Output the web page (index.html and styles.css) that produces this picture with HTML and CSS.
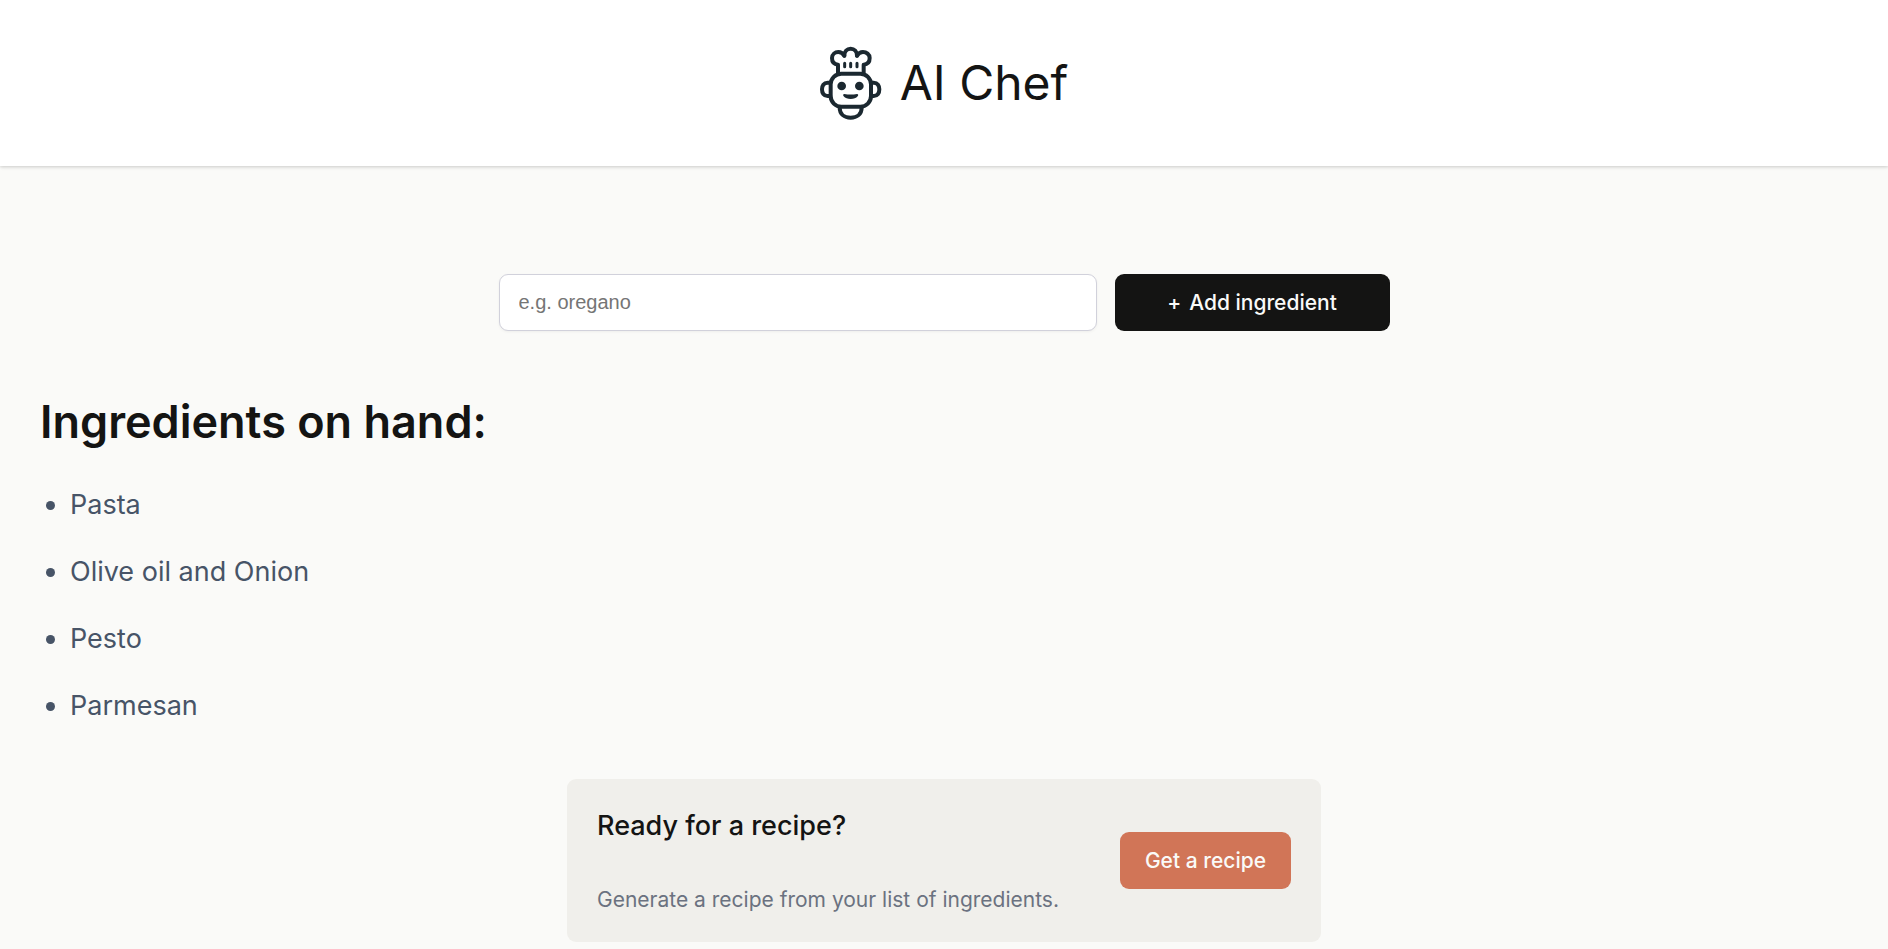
FILE: index.html
```html
<!DOCTYPE html>
<html lang="en">
<head>
  <meta charset="utf-8">
  <meta name="viewport" content="width=device-width, initial-scale=1">
  <title>AI Chef</title>
  <link rel="stylesheet" href="styles.css">
</head>
<body>
  <header class="site-header">
    <svg class="logo" viewBox="63 45 186 222" fill="none" stroke="#1b2830" stroke-width="12" stroke-linecap="round" stroke-linejoin="round" aria-hidden="true">
      <path d="M117 126V101C105 100 99 92 99 81C99 70 108 63 118 63C126 63 132 67 136 74"/>
      <path d="M136 74C136 61 144 53 155 53C166 53 174 61 174 74"/>
      <path d="M194 126V101C206 100 212 92 212 81C212 70 202 63 192 63C184 63 178 67 174 74"/>
      <path stroke-width="9" d="M137 97V107M155 97V107M174 97V107"/>
      <rect x="95" y="128" width="121" height="99" rx="32"/>
      <path d="M92 155H86C74 155 69 164 69 175C69 186 74 195 86 195H94"/>
      <path d="M218 155H224C236 155 241 164 241 175C241 186 236 195 224 195H216"/>
      <path d="M122 230C122 249 136 260 155 260C174 260 188 249 188 230"/>
      <g fill="#1b2830" stroke="none">
        <circle cx="128" cy="165" r="13"/>
        <circle cx="181" cy="165" r="13"/>
        <path d="M136 189Q155 192 174 189Q180 190 176 196Q169 204 155 204Q141 204 134 196Q130 190 136 189Z"/>
      </g>
    </svg>
    <h1 class="site-title">AI Chef</h1>
  </header>

  <main class="content">
    <form class="add-form">
      <input class="add-input" type="text" name="ingredient" placeholder="e.g. oregano" aria-label="Add ingredient">
      <button class="button add-button" type="button"><span class="plus">+</span>Add ingredient</button>
    </form>

    <section class="ingredients">
      <h2 class="ingredients-title">Ingredients on hand:</h2>
      <ul class="ingredients-list">
        <li>Pasta</li>
        <li>Olive oil and Onion</li>
        <li>Pesto</li>
        <li>Parmesan</li>
      </ul>
    </section>

    <section class="recipe-card">
      <div class="recipe-text">
        <h3 class="recipe-title">Ready for a recipe?</h3>
        <p class="recipe-note">Generate a recipe from your list of ingredients.</p>
      </div>
      <button class="button recipe-button" type="button">Get a recipe</button>
    </section>
  </main>
</body>
</html>
```

FILE: styles.css
```css
* {
  box-sizing: border-box;
}

body {
  margin: 0;
  background: #fafaf8;
  color: #141413;
  font-family: Inter, "Liberation Sans", sans-serif;
}

h1, h2, h3, p, ul {
  margin: 0;
}

.site-header {
  display: flex;
  align-items: center;
  justify-content: center;
  gap: 18px;
  padding: 46px 30px;
  background: #fff;
  box-shadow: 0 1px 4px rgba(0, 0, 0, 0.1), 0 1px 3px rgba(0, 0, 0, 0.1);
}

.logo {
  width: 62px;
  height: 74px;
}

.site-title {
  font-size: 48px;
  font-weight: 400;
  line-height: 74px;
}

.content {
  padding: 108px 40px 7px;
}

.add-form {
  display: flex;
  justify-content: center;
  gap: 18px;
}

.add-input {
  flex: 0 1 598px;
  min-width: 0;
  height: 57px;
  padding: 0 19px;
  border: 1px solid #d1d1db;
  border-radius: 9px;
  background: #fff;
  box-shadow: 0 1px 3px rgba(0, 0, 0, 0.05);
  font-family: "Liberation Sans", sans-serif;
  font-size: 20px;
}

.add-input::placeholder {
  color: #757575;
}

.button {
  height: 57px;
  padding: 0 25px;
  border: 0;
  border-radius: 9px;
  color: #fafaf8;
  font-family: inherit;
  font-size: 21px;
  font-weight: 500;
  white-space: nowrap;
}

.add-button {
  flex: 0 0 275px;
  background: #141413;
}

.plus {
  margin-right: 8px;
}

.recipe-button {
  background: #d17557;
}

.ingredients-title {
  margin-top: 63px;
  font-size: 45px;
  font-weight: 600;
  line-height: 56px;
}

.ingredients-list {
  display: grid;
  gap: 22px;
  margin-top: 32px;
  padding-left: 30px;
  color: #475467;
  font-size: 27px;
  line-height: 45px;
}

.recipe-card {
  display: flex;
  align-items: center;
  justify-content: space-between;
  gap: 30px;
  max-width: 754px;
  min-height: 163px;
  margin: 51px auto 0;
  padding: 24px 30px;
  border-radius: 9px;
  background: #f0efeb;
}

.recipe-title {
  font-size: 27px;
  font-weight: 500;
  line-height: 45px;
}

.recipe-note {
  margin-top: 34px;
  color: #6b7280;
  font-size: 21px;
  line-height: 36px;
}
```
